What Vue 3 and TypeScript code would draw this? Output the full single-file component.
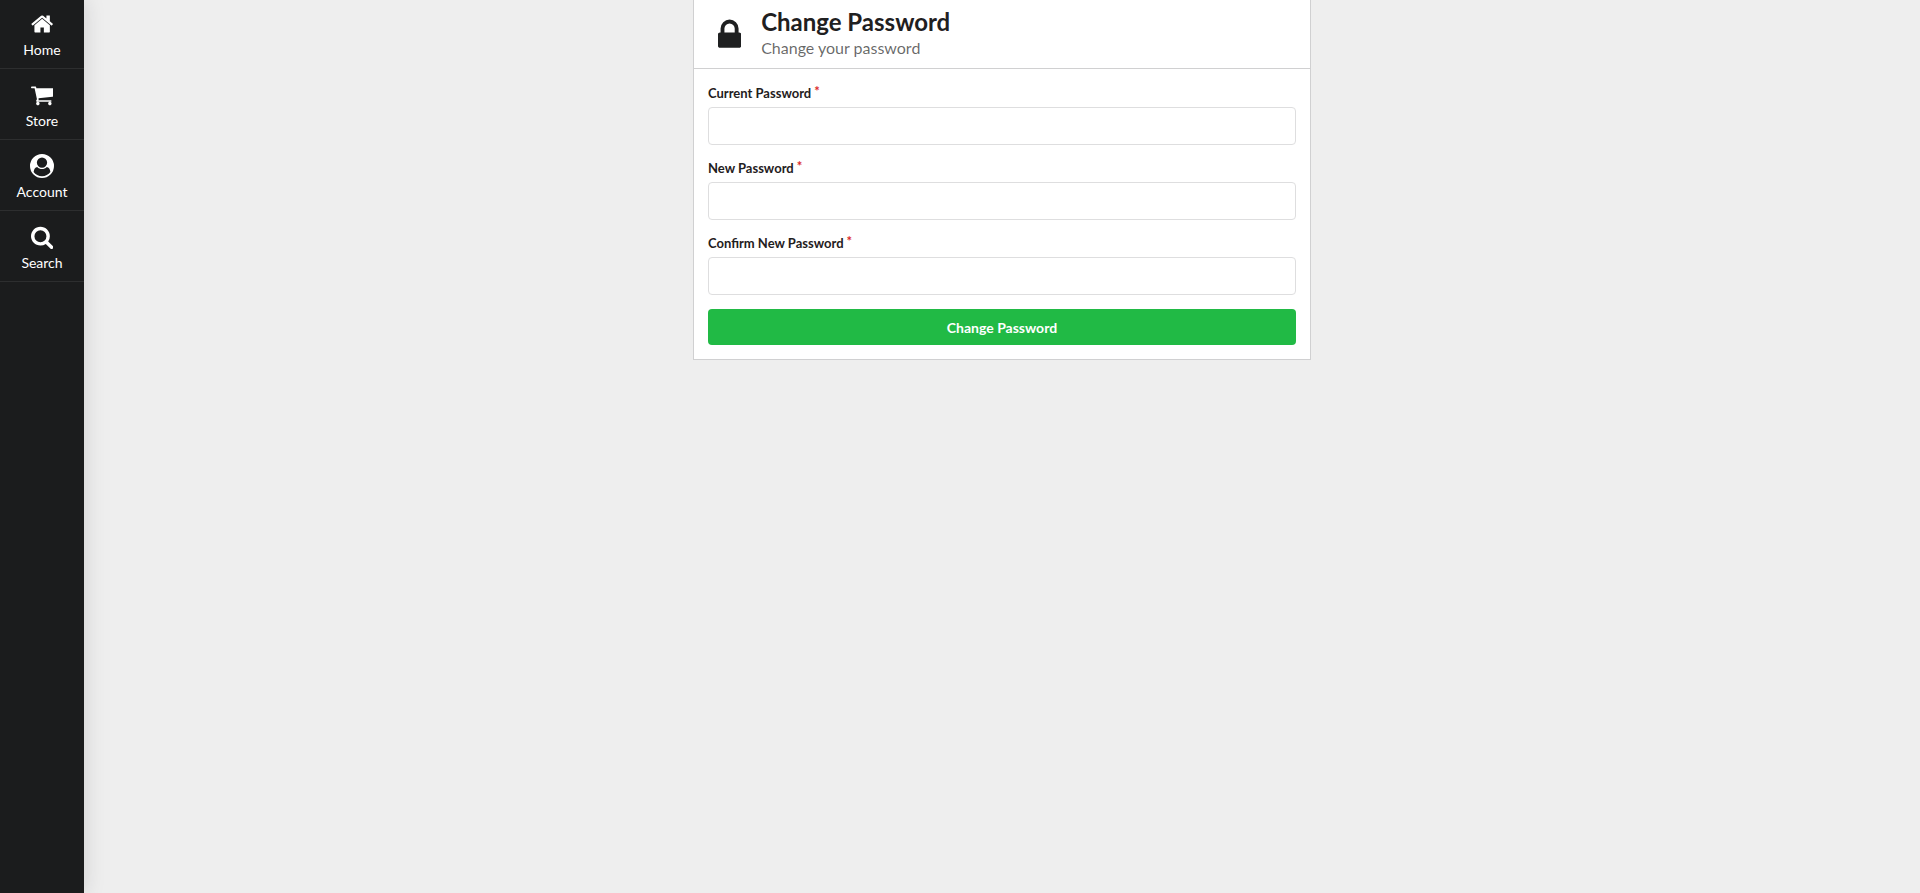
<script setup lang="ts">
import { reactive } from 'vue'

interface NavItem {
  label: string
  width: number
  path: string
}

interface Field {
  id: 'current' | 'next' | 'confirm'
  label: string
  autocomplete: string
}

const navItems: NavItem[] = [
  {
    label: 'Home',
    width: 1664,
    path: 'M1408 992v480q0 26-19 45t-45 19h-384v-384h-256v384h-384q-26 0-45-19t-19-45v-480q0-1 .5-3t.5-3l575-474 575 474q1 2 1 6zm223-69l-62 74q-8 9-21 11h-3q-13 0-21-7l-692-577-692 577q-12 8-24 7-13-2-21-11l-62-74q-8-10-7-23.5t11-21.5l719-599q32-26 76-26t76 26l244 204v-195q0-14 9-23t23-9h192q14 0 23 9t9 23v408l219 182q10 8 11 21.5t-7 23.5z',
  },
  {
    label: 'Store',
    width: 1664,
    path: 'M640 1536q0 52-38 90t-90 38-90-38-38-90 38-90 90-38 90 38 38 90zm896 0q0 52-38 90t-90 38-90-38-38-90 38-90 90-38 90 38 38 90zm128-1088v512q0 24-16.5 42.5t-40.5 21.5l-1044 122q13 60 13 70 0 16-24 64h920q26 0 45 19t19 45-19 45-45 19h-1024q-26 0-45-19t-19-45q0-11 8-31.5t16-36 21.5-40 15.5-29.5l-177-823h-204q-26 0-45-19t-19-45 19-45 45-19h256q16 0 28.5 6.5t19.5 15.5 13 24.5 8 26 5.5 29.5 4.5 26h1201q26 0 45 19t19 45z',
  },
  {
    label: 'Account',
    width: 1792,
    path: 'M896 0a896 896 0 1 1 0 1792a896 896 0 1 1 0-1792zM1523 1339q-22-155-87.5-257.5t-184.5-118.5q-67 74-159.5 115.5t-195.5 41.5-195.5-41.5-159.5-115.5q-119 16-184.5 118.5t-87.5 257.5q106 150 271 237.5t356 87.5 356-87.5 271-237.5zM1280 640q0-159-112.5-271.5t-271.5-112.5-271.5 112.5-112.5 271.5 112.5 271.5 271.5 112.5 271.5-112.5 112.5-271.5z',
  },
  {
    label: 'Search',
    width: 1664,
    path: 'M1152 832q0-185-131.5-316.5t-316.5-131.5-316.5 131.5-131.5 316.5 131.5 316.5 316.5 131.5 316.5-131.5 131.5-316.5zm512 832q0 52-38 90t-90 38q-54 0-90-38l-343-342q-179 124-399 124-143 0-273.5-55.5t-225-150-150-225-55.5-273.5 55.5-273.5 150-225 225-150 273.5-55.5 273.5 55.5 225 150 150 225 55.5 273.5q0 220-124 399l343 343q37 37 37 90z',
  },
]

const fields: Field[] = [
  { id: 'current', label: 'Current Password', autocomplete: 'current-password' },
  { id: 'next', label: 'New Password', autocomplete: 'new-password' },
  { id: 'confirm', label: 'Confirm New Password', autocomplete: 'new-password' },
]

const form = reactive({ current: '', next: '', confirm: '' })
</script>

<template>
  <div class="page">
    <nav class="sidebar" aria-label="Main">
      <a v-for="item in navItems" :key="item.label" class="nav-item" href="#">
        <svg class="nav-icon" :viewBox="`0 0 ${item.width} 1792`" aria-hidden="true">
          <path :d="item.path" fill="currentColor" fill-rule="evenodd" />
        </svg>
        <span>{{ item.label }}</span>
      </a>
    </nav>

    <main class="content">
      <section class="card">
        <header class="card-header">
          <svg class="lock-icon" viewBox="0 0 1152 1792" aria-hidden="true">
            <path
              fill="currentColor"
              d="M320 768h512v-192q0-106-75-181t-181-75-181 75-75 181v192zm832 96v576q0 40-28 68t-68 28h-960q-40 0-68-28t-28-68v-576q0-40 28-68t68-28h32v-192q0-184 132-316t316-132 316 132 132 316v192h32q40 0 68 28t28 68z"
            />
          </svg>
          <div>
            <h1 class="title">Change Password</h1>
            <p class="subtitle">Change your password</p>
          </div>
        </header>

        <form class="form" @submit.prevent>
          <div v-for="field in fields" :key="field.id" class="field">
            <label class="label" :for="field.id">{{ field.label }}<span class="required">*</span></label>
            <input
              :id="field.id"
              v-model="form[field.id]"
              class="input"
              type="password"
              :autocomplete="field.autocomplete"
              required
            />
          </div>
          <button class="submit" type="submit">Change Password</button>
        </form>
      </section>
    </main>
  </div>
</template>

<style>
body {
  background: #eee;
}
</style>

<style scoped>
.page {
  display: flex;
  min-height: 100vh;
  font-family: Lato, 'Liberation Sans', sans-serif;
  font-size: 14px;
  line-height: 20px;
  color: #1f2021;
}

.page * {
  box-sizing: border-box;
}

.sidebar {
  flex: none;
  width: 84px;
  background: #1b1c1d;
  box-shadow: 0 0 20px rgba(34, 36, 38, 0.15);
}

.nav-item {
  display: flex;
  flex-direction: column;
  align-items: center;
  gap: 4px;
  padding: 14px 0 8px;
  border-bottom: 1px solid #2d2e2f;
  color: #fff;
  text-decoration: none;
}

.nav-item:first-child {
  padding-top: 12px;
}

.nav-icon {
  display: block;
  height: 24px;
}

.content {
  flex: 1;
  min-width: 0;
}

.card {
  max-width: 618px;
  margin: 0 auto;
  background: #fff;
  border: 1px solid #d0d0d1;
  border-top: 0;
}

.card-header {
  display: flex;
  align-items: flex-end;
  gap: 20px;
  padding: 6px 14px 11px 24px;
  border-bottom: 1px solid #d0d0d1;
}

.lock-icon {
  display: block;
  height: 36px;
  margin-bottom: 4px;
}

.title {
  margin: 0;
  font-size: 24px;
  font-weight: 700;
  line-height: 32px;
}

.subtitle {
  margin: 0;
  font-size: 16px;
  line-height: 19px;
  color: rgba(0, 0, 0, 0.6);
}

.form {
  padding: 15px 14px 14px;
}

.field {
  margin-bottom: 14px;
}

.label {
  display: block;
  margin-bottom: 4px;
  font-size: 13px;
  font-weight: 700;
  line-height: 19px;
}

.required {
  margin-left: 3px;
  color: #db2828;
  vertical-align: top;
  line-height: 14px;
}

.input {
  display: block;
  width: 100%;
  height: 38px;
  padding: 9px 14px;
  border: 1px solid #dededf;
  border-radius: 4px;
  background: #fff;
  font: inherit;
  color: inherit;
}

.input:focus {
  border-color: #85b7d9;
  outline: none;
}

.submit {
  display: block;
  width: 100%;
  height: 36px;
  padding: 1px 20px 0;
  border: 0;
  border-radius: 4px;
  background: #21ba45;
  color: #fff;
  font: inherit;
  font-weight: 700;
  cursor: pointer;
}
</style>
